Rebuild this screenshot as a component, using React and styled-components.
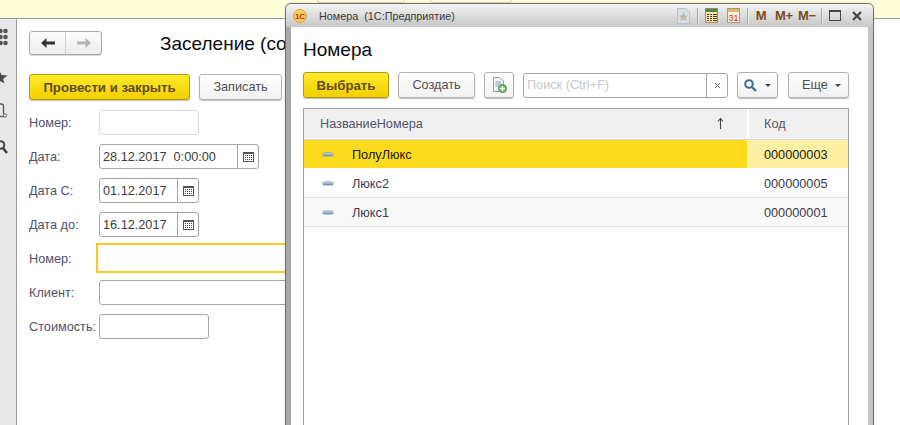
import React from 'react';
import styled, { createGlobalStyle, css } from 'styled-components';

const Global = createGlobalStyle`
  html, body { margin: 0; padding: 0; background: #fff; }
  * { box-sizing: border-box; }
  body { font-family: "Liberation Sans", Arial, sans-serif; font-size: 12.7px; color: #4a4a4a; }
`;

const Page = styled.div`
  position: relative;
  width: 900px;
  height: 425px;
  overflow: hidden;
  display: flex;
  flex-direction: column;
`;

const TopBar = styled.div`
  height: 19px;
  flex: none;
  background: #fefed9;
  border-bottom: 1px solid #9c9c9c;
  display: flex;
  align-items: flex-start;
  padding-left: 317px;
  gap: 25px;
`;

const TopTab = styled.div`
  width: ${(p) => p.$w}px;
  height: 3px;
  background: #fffbe2;
  border: 1px solid #e6d9a0;
  border-top: 0;
  border-radius: 0 0 3px 3px;
`;

const Main = styled.div`
  flex: 1;
  display: flex;
  min-height: 0;
`;

const Sidebar = styled.div`
  width: 17px;
  flex: none;
  background: #e9e9e9;
  border-right: 1px solid #9c9c9c;
  display: flex;
  flex-direction: column;
  align-items: flex-start;
  padding-top: 9px;
  overflow: hidden;
`;

const SideIcon = styled.div`
  display: flex;
  margin-top: ${(p) => p.$top || 0}px;
`;

const FormPanel = styled.div`
  flex: 1;
  padding: 12px 0 0 12px;
  overflow: hidden;
`;

const Head = styled.div`
  display: flex;
  align-items: center;
  height: 24px;
`;

const Nav = styled.div`
  width: 73px;
  height: 24px;
  display: flex;
  border: 1px solid #a8a8a8;
  border-radius: 3px;
  background: linear-gradient(#fdfdfd, #ececec);
  box-shadow: 0 1px 0 #d8d8d8;
`;

const NavPart = styled.div`
  flex: 1;
  display: flex;
  align-items: center;
  justify-content: center;
  & + & { border-left: 1px solid #cfcfcf; }
`;

const DocTitle = styled.div`
  margin-left: 58px;
  padding-top: 2px;
  font-size: 19px;
  color: #0c0c0c;
  white-space: nowrap;
`;

const Bar = styled.div`
  display: flex;
  align-items: center;
  height: 26px;
  margin-top: ${(p) => p.$top || 0}px;
`;

const Button = styled.div`
  height: 26px;
  width: ${(p) => p.$w}px;
  margin-left: ${(p) => p.$left || 0}px;
  padding-left: ${(p) => p.$pl || 0}px;
  flex: none;
  display: flex;
  align-items: center;
  justify-content: ${(p) => (p.$pl ? 'flex-start' : 'center')};
  gap: ${(p) => p.$gap || 7}px;
  border: 1px solid #b0b0b0;
  border-radius: 3px;
  background: linear-gradient(#ffffff, #f2f2f2);
  box-shadow: 0 1px 1px #bdbdbd;
  color: #4e4e4e;
  ${(p) =>
    p.$primary &&
    css`
      border-color: #b39a12;
      background: linear-gradient(#ffea2a, #f4d000);
      color: #5c4c20;
      font-weight: bold;
      font-size: 13.2px;
    `}
`;

const Fields = styled.div`
  margin-top: 5px;
`;

const Row = styled.div`
  height: 34px;
  display: flex;
  align-items: flex-start;
  padding-top: ${(p) => (p.$focus ? 2 : 5)}px;
`;

const Label = styled.div`
  width: ${(p) => (p.$focus ? 67 : 70)}px;
  flex: none;
  line-height: 27px;
  color: #50506a;
  padding-top: ${(p) => (p.$focus ? 3 : 0)}px;
  white-space: nowrap;
`;

const Input = styled.div`
  width: ${(p) => p.$w}px;
  height: 25px;
  flex: none;
  display: flex;
  align-items: center;
  border: 1px solid ${(p) => (p.$soft ? '#dcdcdc' : '#a4a4a4')};
  border-radius: 3px;
  background: #fff;
  color: #3c3c3c;
  white-space: pre;
  overflow: hidden;
`;

const FocusInput = styled.div`
  width: 260px;
  height: 30px;
  flex: none;
  border: 2px solid #fcc81e;
  background: #fff;
`;

const InputText = styled.div`
  flex: 1;
  padding-left: 3px;
  white-space: pre;
`;

const CalButton = styled.div`
  width: 21px;
  height: 100%;
  flex: none;
  border-left: 1px solid #a4a4a4;
  display: flex;
  align-items: center;
  justify-content: center;
`;

const Win = styled.div`
  position: absolute;
  left: 285px;
  top: 3px;
  width: 589px;
  height: 430px;
  border: 1px solid #6f6f6f;
  border-radius: 6px 6px 0 0;
  background: linear-gradient(90deg, #a9a9a9, #dcdcdc 50%, #c4c4c4);
  display: flex;
  flex-direction: column;
  box-shadow: 0 0 1px #888;
`;

const WinTitle = styled.div`
  height: 23px;
  flex: none;
  border-radius: 5px 5px 0 0;
  background: linear-gradient(#f4f4f4, #c6c6c6);
  display: flex;
  align-items: center;
  padding-left: 7px;
`;

const WinCaption = styled.div`
  margin-left: 12px;
  font-size: 10.8px;
  color: #3a3a3a;
  white-space: pre;
  flex: 1;
`;

const TitleTools = styled.div`
  display: flex;
  align-items: center;
  height: 100%;
  padding-right: 11px;
`;

const ToolSep = styled.div`
  width: 1px;
  height: 16px;
  background: #a6a6a6;
  box-shadow: 1px 0 0 #ececec;
  margin: 0 ${(p) => p.$r || 7}px 0 ${(p) => p.$l || 7}px;
`;

const ToolGap = styled.span`
  width: ${(p) => p.$w}px;
  flex: none;
`;

const MemBtn = styled.div`
  font-size: 13px;
  font-weight: bold;
  letter-spacing: -0.3px;
  color: #7a4a20;
  width: ${(p) => p.$w}px;
  text-align: center;
  white-space: nowrap;
  margin-left: ${(p) => p.$left || 0}px;
`;

const WinBody = styled.div`
  flex: 1;
  margin: 0 5px;
  background: #fff;
  padding: 0 0 0 12px;
  min-height: 0;
`;

const WinHeading = styled.div`
  font-size: 19px;
  color: #0c0c0c;
  height: 45px;
  padding-top: 12px;
  line-height: 22px;
`;

const Search = styled.div`
  width: 205px;
  height: 25px;
  margin-left: 9px;
  display: flex;
  align-items: center;
  border: 1px solid #a4a4a4;
  border-radius: 3px;
  color: #c4c8cc;
`;

const SearchClear = styled.div`
  width: 21px;
  height: 100%;
  border-left: 1px solid #a4a4a4;
  display: flex;
  align-items: center;
  justify-content: center;
`;

const Caret = styled.span`
  width: 0;
  height: 0;
  border-left: 3px solid transparent;
  border-right: 3px solid transparent;
  border-top: 3px solid #444;
`;

const Table = styled.div`
  width: 546px;
  height: 340px;
  margin-top: 10px;
  border: 1px solid #a0a0a0;
`;

const columns = css`
  display: grid;
  grid-template-columns: 443px 1fr;
`;

const HeadRow = styled.div`
  ${columns}
  height: 30px;
  background: #f0f0f0;
  border-bottom: 1px solid #fff;
  box-shadow: 0 1px 0 #d8d8d8;
`;

const HeadCell = styled.div`
  display: flex;
  align-items: center;
  justify-content: space-between;
  padding: 0 ${(p) => p.$pr || 0}px 0 ${(p) => p.$pl}px;
  color: #55556a;
  & + & { border-left: 2px solid #fff; }
`;

const DataRow = styled.div`
  ${columns}
  height: 29px;
  border-bottom: 1px solid #e2e2e2;
  background: ${(p) => (p.$alt ? '#f9f9f9' : '#fff')};
  color: #3a3a50;
  ${(p) =>
    p.$active &&
    css`
      border-bottom-color: #fff;
      background: #fff;
      color: #20180a;
      margin-top: 1px;
    `}
`;

const NameCell = styled.div`
  display: flex;
  align-items: center;
  padding-left: 19px;
  gap: 19px;
  background: ${(p) => (p.$active ? '#fcdb1e' : 'transparent')};
`;

const CellText = styled.span`
  padding-top: 2px;
`;

const CodeCell = styled.div`
  display: flex;
  align-items: center;
  padding-left: ${(p) => (p.$active ? 16 : 17)}px;
  background: ${(p) => (p.$active ? '#fdf0a2' : 'transparent')};
  ${(p) => p.$active && 'border-left: 1px solid #fff;'}
`;

const RowMark = styled.span`
  width: 10px;
  height: 3px;
  border-radius: 1px;
  background: linear-gradient(#c4d4e4, #6f8ca8);
  box-shadow: 0 0 0 0.5px #7f93a8;
`;

const CalIcon = () => (
  <svg width="11" height="10" viewBox="0 0 11 10">
    <rect x="0.5" y="0.5" width="10" height="9" fill="#fff" stroke="#555" />
    <rect x="0" y="0" width="11" height="2" fill="#555" />
    {[2, 4, 6, 8].map((x) =>
      [3, 5, 7].map((y) => <rect key={`${x}-${y}`} x={x} y={y} width="1" height="1" fill="#444" />)
    )}
  </svg>
);

const ArrowLeft = ({ color }) => (
  <svg width="14" height="10" viewBox="0 0 14 10">
    <path d="M5.5 0 L0 5 L5.5 10 L5.5 6.5 L14 6.5 L14 3.5 L5.5 3.5 Z" fill={color} />
  </svg>
);

const ArrowRight = ({ color }) => (
  <svg width="14" height="10" viewBox="0 0 14 10">
    <path d="M8.5 0 L14 5 L8.5 10 L8.5 6.5 L0 6.5 L0 3.5 L8.5 3.5 Z" fill={color} />
  </svg>
);

const Logo = () => (
  <svg width="14" height="14" viewBox="0 0 14 14">
    <circle cx="7" cy="7" r="6.5" fill="#f8d060" stroke="#d8a040" />
    <text x="7" y="10" fontSize="8" fontWeight="bold" fill="#c82010" textAnchor="middle" fontFamily="Liberation Sans">1С</text>
  </svg>
);

const StarDoc = () => (
  <svg width="13" height="16" viewBox="0 0 13 16">
    <path d="M0.5 0.5 H9 L12.5 4 V15.5 H0.5 Z" fill="#d8dfe6" stroke="#b4c2d0" />
    <path d="M6.5 4 L8 7.4 L11 7.6 L8.8 9.8 L9.5 13 L6.5 11.3 L3.5 13 L4.2 9.8 L2 7.6 L5 7.4 Z" fill="#bfb9a8" />
  </svg>
);

const CalcIcon = () => (
  <svg width="13" height="15" viewBox="0 0 13 15">
    <rect x="0.5" y="0.5" width="12" height="14" fill="#f6e2b4" stroke="#9a8a60" />
    <rect x="1" y="1" width="11" height="3" fill="#4e8a3a" />
    {[2, 5, 8, 10].map((x) =>
      [6, 8, 10, 12].map((y) => <rect key={`${x}-${y}`} x={x} y={y} width="2" height="1" fill="#5a3a18" />)
    )}
  </svg>
);

const DateIcon = () => (
  <svg width="13" height="15" viewBox="0 0 13 15">
    <rect x="0.5" y="0.5" width="12" height="14" fill="#fff4e0" stroke="#a89878" />
    <rect x="1" y="1" width="11" height="3" fill="#e8b468" />
    <text x="6.5" y="13" fontSize="9" fill="#e02810" textAnchor="middle" fontFamily="Liberation Sans">31</text>
  </svg>
);

const AddDoc = () => (
  <svg width="16" height="16" viewBox="0 0 16 16">
    <path d="M2.5 0.5 H9 L12.5 4 V14.5 H2.5 Z" fill="#eef3f8" stroke="#8ca0b4" />
    <path d="M4.5 5 H10 M4.5 7 H10 M4.5 9 H8" stroke="#8ca0b4" />
    <circle cx="11.5" cy="11.5" r="4" fill="#6cb860" stroke="#4c9044" />
    <path d="M11.5 9 V14 M9 11.5 H14" stroke="#fff" strokeWidth="1.5" />
  </svg>
);

const Lens = () => (
  <svg width="13" height="13" viewBox="0 0 13 13">
    <circle cx="5" cy="5" r="3.8" fill="none" stroke="#3e6c98" strokeWidth="2" />
    <path d="M8 8 L12 12" stroke="#3e6c98" strokeWidth="2.4" />
  </svg>
);

// the sidebar icons are cropped by the left edge of the screen
const SideGrid = () => (
  <svg width="8" height="18" viewBox="0 0 8 18">
    {[3, 9, 15].map((y) => (
      <g key={y} fill="#555">
        <circle cx="0.5" cy={y} r="2.3" />
        <circle cx="5.5" cy={y} r="2.3" />
      </g>
    ))}
  </svg>
);

const SideStar = () => (
  <svg width="8" height="12" viewBox="0 0 8 12">
    <path d="M0 0 L1.5 3 L7.5 3.5 L3 7 L4.5 11.5 L0 9 Z" fill="#4a4a4a" />
  </svg>
);

const SideDoc = () => (
  <svg width="8" height="15" viewBox="0 0 8 15">
    <path d="M0 1 H1.5 Q3.5 1 3.5 3 V11" fill="none" stroke="#555" strokeWidth="1.3" />
    <path d="M0 13.5 H4" stroke="#555" strokeWidth="1.3" />
    <circle cx="5" cy="12.5" r="1.6" fill="#fff" stroke="#555" />
  </svg>
);

const SideLens = () => (
  <svg width="8" height="15" viewBox="0 0 8 15">
    <circle cx="0.5" cy="5" r="3.8" fill="none" stroke="#444" strokeWidth="2" />
    <path d="M3 8 L7 13" stroke="#444" strokeWidth="2.6" />
  </svg>
);

const rows = [
  { name: 'ПолуЛюкс', code: '000000003', active: true },
  { name: 'Люкс2', code: '000000005' },
  { name: 'Люкс1', code: '000000001', alt: true },
];

export default function App() {
  return (
    <Page>
      <Global />
      <TopBar>
        <TopTab $w={88} />
        <TopTab $w={82} />
      </TopBar>
      <Main>
        <Sidebar>
          <SideIcon><SideGrid /></SideIcon>
          <SideIcon $top={26}><SideStar /></SideIcon>
          <SideIcon $top={19}><SideDoc /></SideIcon>
          <SideIcon $top={22}><SideLens /></SideIcon>
        </Sidebar>
        <FormPanel>
          <Head>
            <Nav>
              <NavPart><ArrowLeft color="#333" /></NavPart>
              <NavPart><ArrowRight color="#b4b4b4" /></NavPart>
            </Nav>
            <DocTitle>Заселение (со</DocTitle>
          </Head>
          <Bar $top={19}>
            <Button $primary $w={161}>Провести и закрыть</Button>
            <Button $w={83} $left={9}>Записать</Button>
          </Bar>
          <Fields>
            <Row>
              <Label>Номер:</Label>
              <Input $w={100} $soft />
            </Row>
            <Row>
              <Label>Дата:</Label>
              <Input $w={160}>
                <InputText>28.12.2017  0:00:00</InputText>
                <CalButton><CalIcon /></CalButton>
              </Input>
            </Row>
            <Row>
              <Label>Дата С:</Label>
              <Input $w={100}>
                <InputText>01.12.2017</InputText>
                <CalButton><CalIcon /></CalButton>
              </Input>
            </Row>
            <Row>
              <Label>Дата до:</Label>
              <Input $w={100}>
                <InputText>16.12.2017</InputText>
                <CalButton><CalIcon /></CalButton>
              </Input>
            </Row>
            <Row $focus>
              <Label $focus>Номер:</Label>
              <FocusInput />
            </Row>
            <Row>
              <Label>Клиент:</Label>
              <Input $w={260} />
            </Row>
            <Row>
              <Label>Стоимость:</Label>
              <Input $w={110} />
            </Row>
          </Fields>
        </FormPanel>
      </Main>

      <Win>
        <WinTitle>
          <Logo />
          <WinCaption>Номера  (1С:Предприятие)</WinCaption>
          <TitleTools>
            <StarDoc />
            <ToolSep />
            <CalcIcon />
            <ToolGap $w={9} />
            <DateIcon />
            <ToolSep />
            <MemBtn $w={12}>M</MemBtn>
            <MemBtn $w={18} $left={8}>M+</MemBtn>
            <MemBtn $w={18} $left={5}>M−</MemBtn>
            <ToolSep $l={5} />
            <svg width="12" height="11" viewBox="0 0 12 11">
              <rect x="0.5" y="1" width="11" height="9.5" fill="none" stroke="#444" />
              <rect x="0" y="0" width="12" height="2" fill="#444" />
            </svg>
            <ToolGap $w={11} />
            <svg width="10" height="10" viewBox="0 0 10 10">
              <path d="M1 1 L9 9 M9 1 L1 9" stroke="#444" strokeWidth="2.2" />
            </svg>
          </TitleTools>
        </WinTitle>
        <WinBody>
          <WinHeading>Номера</WinHeading>
          <Bar>
            <Button $primary $w={86}>Выбрать</Button>
            <Button $w={77} $left={9}>Создать</Button>
            <Button $w={30} $left={9}><AddDoc /></Button>
            <Search>
              <InputText>Поиск (Ctrl+F)</InputText>
              <SearchClear>
                <svg width="7" height="7" viewBox="0 0 7 7">
                  <path d="M1 1 L6 6 M6 1 L1 6" stroke="#555" />
                </svg>
              </SearchClear>
            </Search>
            <Button $w={41} $left={9} $gap={8}><Lens /><Caret /></Button>
            <Button $w={61} $left={10} $pl={13} $gap={7}>Еще<Caret /></Button>
          </Bar>
          <Table>
            <HeadRow>
              <HeadCell $pl={16} $pr={23}>
                <span>НазваниеНомера</span>
                <svg width="7" height="11" viewBox="0 0 7 11">
                  <path d="M3.5 1 V11 M1 3.5 L3.5 0.5 L6 3.5" fill="none" stroke="#444" strokeWidth="1.1" />
                </svg>
              </HeadCell>
              <HeadCell $pl={15}>Код</HeadCell>
            </HeadRow>
            {rows.map((r) => (
              <DataRow key={r.code} $active={r.active} $alt={r.alt}>
                <NameCell $active={r.active}>
                  <RowMark />
                  <CellText>{r.name}</CellText>
                </NameCell>
                <CodeCell $active={r.active}><CellText>{r.code}</CellText></CodeCell>
              </DataRow>
            ))}
          </Table>
        </WinBody>
      </Win>
    </Page>
  );
}
